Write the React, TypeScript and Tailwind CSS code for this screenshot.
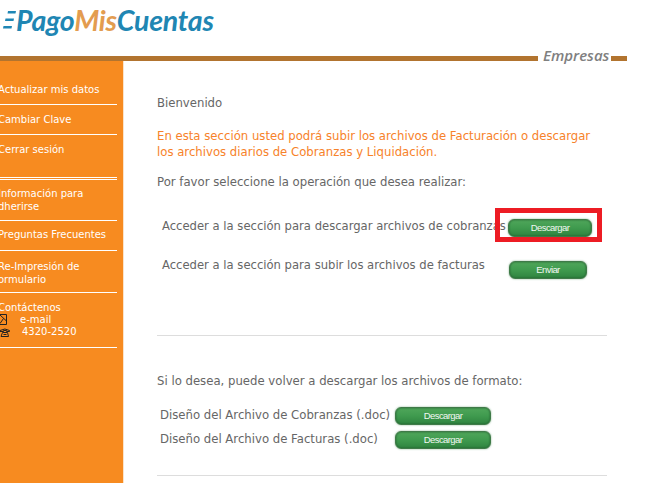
import React from 'react';

const GreenButton = ({ label, className }: { label: string; className: string }) => (
  <button className={`flex h-[18px] shrink-0 items-center justify-center rounded-[6px] border border-[#3f7a48] bg-gradient-to-b from-[#4fa65a] via-[#3f9a4e] to-[#2f8440] font-['Liberation_Sans',sans-serif] text-[9.5px] tracking-[-0.6px] text-[#f1f7f1] shadow-[0_0_2px_#7fae86,inset_0_0_2px_#1f5a2c] ${className}`}>
    {label}
  </button>
);

const MenuItem = ({ lines, className = '' }: { lines: string[]; className?: string }) => (
  <div className={`border-b border-white ${className}`}>
    {lines.map((l) => (
      <div key={l} className="-ml-[2px] whitespace-nowrap">{l}</div>
    ))}
  </div>
);

export default function App() {
  return (
    <div className="h-[483px] w-[667px] overflow-hidden bg-white font-['DejaVu_Sans',sans-serif] text-[11.7px] text-[#666]">
      {/* Logo */}
      <div className="flex h-[56px] items-start pl-[2px] pt-[1px]">
        <svg width="14" height="30" viewBox="0 0 14 30" className="shrink-0">
          <path d="M6 10h8l-.5 2.500H5.500zM3.500 17.500h8.500l-.5 2.500H3zM1.500 25H10l-.5 2.500H1z" fill="#1f86b5" />
        </svg>
        <span className="font-['Lato',sans-serif] text-[28.5px] font-bold italic leading-[38px] tracking-[-0.2px] text-[#2086b3]">
          Pago<span className="text-[#e39c4f]">Mis</span>Cuentas
        </span>
      </div>

      {/* Bar */}
      <div className="flex h-[5px] items-center">
        <div className="h-[5px] w-[538px] bg-[#b2742f]" />
        <span className="mb-[6px] w-[73px] whitespace-nowrap pl-[5px] font-['Open_Sans',sans-serif] text-[15px] font-semibold italic leading-[5px] text-[#808080]">Empresas</span>
        <div className="h-[5px] w-[16px] bg-[#b2742f]" />
      </div>

      <div className="flex h-[422px]">
        {/* Sidebar */}
        <aside className="w-[124px] shrink-0 overflow-hidden border-r border-[#fbe3c9] bg-[#f78b20] pr-[6px] pt-[14px] text-[10px] text-white">
          <MenuItem lines={['Actualizar mis datos']} className="pb-[7px] pt-[8px] leading-[14px]" />
          <MenuItem lines={['Cambiar Clave']} className="pb-[7px] pt-[8px] leading-[14px]" />
          <MenuItem lines={['Cerrar sesión']} className="pb-[20px] pt-[8px] leading-[14px]" />
          <div className="mt-px">
            <MenuItem lines={['Información para', 'dherirse']} className="border-t pb-[7px] pt-[7px] leading-[13px]" />
            <MenuItem lines={['Preguntas Frecuentes']} className="pb-[8px] pt-[7px] leading-[14px]" />
            <MenuItem lines={['Re-Impresión de', 'ormulario']} className="pb-[6px] pt-[9px] leading-[13px]" />
            <div className="border-b border-white pb-[9px] pt-[9px] leading-[12px]">
              <div className="-ml-[2px] h-[12px]">Contáctenos</div>
              <div className="flex h-[12px] items-center">
                <svg width="7" height="12" viewBox="0 0 7 12" className="shrink-0">
                  <path d="M0 .5h6.500v10H0M0 1l6.500 6M0 9.500l3.500-5" fill="none" stroke="#222" />
                </svg>
                <span className="ml-[13px]">e-mail</span>
              </div>
              <div className="flex h-[12px] items-center">
                <svg width="10" height="9" viewBox="0 0 10 9" className="shrink-0">
                  <path d="M0 2.500q5-3 9.500 0v1h-3v-1h-3v1H0zM1 8.500l1.500-4h5l1 4zM3.500 6.500h3" fill="none" stroke="#222" />
                </svg>
                <span className="ml-[12px]">4320-2520</span>
              </div>
            </div>
          </div>
        </aside>

        {/* Main */}
        <main className="w-[450px] pl-[33px] pt-[34px] box-content">
          <p className="h-[16px] leading-[16px]">Bienvenido</p>
          <p className="mt-[17px] whitespace-nowrap leading-[16px] text-[#f7822a]">
            En esta sección usted podrá subir los archivos de Facturación o descargar
            <br />
            los archivos diarios de Cobranzas y Liquidación.
          </p>
          <p className="mt-[14px] h-[16px] leading-[16px]">Por favor seleccione la operación que desea realizar:</p>

          <div className="relative ml-[5px] mt-[29px] flex h-[18px] items-start">
            <span className="-mt-px w-[346px] whitespace-nowrap text-[11.6px] leading-[16px]">Acceder a la sección para descargar archivos de cobranzas</span>
            <GreenButton label="Descargar" className="w-[84px]" />
            <div className="pointer-events-none absolute left-[333px] top-[-11px] h-[34px] w-[107px] border-[5px] border-[#ed1c24]" />
          </div>
          <div className="ml-[5px] mt-[24px] flex h-[18px] items-start">
            <span className="-mt-[4px] w-[347px] whitespace-nowrap text-[11.6px] leading-[16px]">Acceder a la sección para subir los archivos de facturas</span>
            <GreenButton label="Enviar" className="w-[78px]" />
          </div>

          <hr className="mt-[56px] w-[450px] border-[#ddd]" />
          <p className="mt-[37px] h-[16px] leading-[16px]">Si lo desea, puede volver a descargar los archivos de formato:</p>

          <div className="ml-[3px] mt-[18px] flex h-[18px] items-center">
            <span className="w-[235px] whitespace-nowrap">Diseño del Archivo de Cobranzas (.doc)</span>
            <GreenButton label="Descargar" className="w-[96px]" />
          </div>
          <div className="ml-[3px] mt-[6px] flex h-[18px] items-center">
            <span className="w-[235px] whitespace-nowrap">Diseño del Archivo de Facturas (.doc)</span>
            <GreenButton label="Descargar" className="w-[96px]" />
          </div>
          <hr className="mt-[26px] w-[450px] border-[#ddd]" />
        </main>
      </div>
    </div>
  );
}
